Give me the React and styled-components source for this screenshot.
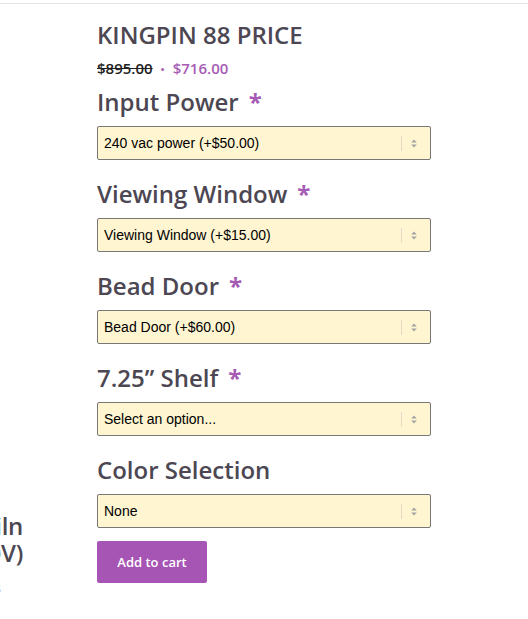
import { createGlobalStyle } from 'styled-components';
import styled from 'styled-components';

const options = [
  { label: 'Input Power', required: true, value: '240 vac power (+$50.00)' },
  { label: 'Viewing Window', required: true, value: 'Viewing Window (+$15.00)' },
  { label: 'Bead Door', required: true, value: 'Bead Door (+$60.00)' },
  { label: '7.25” Shelf', required: true, value: 'Select an option...' },
  { label: 'Color Selection', required: false, value: 'None' },
];

function App() {
  return (
    <>
      <GlobalStyle />
      <Page>
        <SideColumn>
          <SideTitle>
            Kingpin 88 Kiln
            <br />
            (240V)
          </SideTitle>
          <SideLink>Reviews</SideLink>
        </SideColumn>

        <Summary>
          <ProductTitle>KINGPIN 88 PRICE</ProductTitle>
          <PriceRow>
            <OldPrice>$895.00</OldPrice>
            <Dot>•</Dot>
            <NewPrice>$716.00</NewPrice>
          </PriceRow>

          {options.map((opt) => (
            <Field key={opt.label}>
              <FieldLabel>
                {opt.label}
                {opt.required && <Required>*</Required>}
              </FieldLabel>
              <SelectWrap>
                <Select defaultValue={opt.value}>
                  <option>{opt.value}</option>
                </Select>
                <SelectArrows>
                  <svg width="6" height="9" viewBox="0 0 6 9">
                    <path d="M3 0.5 L5.8 3.5 L0.2 3.5 Z" fill="#a3a3a3" />
                    <path d="M3 8.5 L5.8 5.5 L0.2 5.5 Z" fill="#a3a3a3" />
                  </svg>
                </SelectArrows>
              </SelectWrap>
            </Field>
          ))}

          <AddButton type="button">Add to cart</AddButton>
        </Summary>
      </Page>
    </>
  );
}

export default App;

const GlobalStyle = createGlobalStyle`
  html, body {
    margin: 0;
    padding: 0;
    background: #fff;
  }

  body {
    font-family: 'Open Sans', 'Noto Sans', sans-serif;
    overflow: hidden;
  }
`;

const Page = styled.div`
  margin-top: 3px;
  border-top: 1px solid #e3e3e3;
  height: 615px;
  display: grid;
  grid-template-columns: 27px 334px;
  column-gap: 70px;
`;

const SideColumn = styled.div`
  overflow: hidden;
  padding-top: 508px;
  display: flex;
  flex-flow: column;
  align-items: flex-end;
`;

const SideTitle = styled.h2`
  margin: 0;
  padding-right: 4px;
  font-size: 24px;
  line-height: 27px;
  font-weight: 600;
  letter-spacing: -0.3px;
  color: #4c4752;
  text-align: right;
  white-space: nowrap;
`;

const SideLink = styled.span`
  margin-top: 12px;
  padding-right: 26px;
  font-size: 14px;
  line-height: 20px;
  color: #a66fd0;
  white-space: nowrap;
`;

const Summary = styled.div`
  padding-top: 16px;
  display: flex;
  flex-flow: column;
  align-items: flex-start;
`;

const ProductTitle = styled.h1`
  margin: 0 0 9px;
  font-size: 24px;
  line-height: 29px;
  font-weight: 600;
  color: #4c4752;
`;

const PriceRow = styled.div`
  display: flex;
  align-items: baseline;
  gap: 8px;
  font-size: 15px;
  line-height: 20px;
  font-weight: 600;
  margin-bottom: 7px;
`;

const OldPrice = styled.del`
  color: #222;
  font-weight: 600;
`;

const Dot = styled.span`
  color: #a65cb4;
  font-size: 11px;
`;

const NewPrice = styled.span`
  color: #a65cb4;
`;

const Field = styled.div`
  width: 100%;
  margin-bottom: 19px;

  &:last-of-type {
    margin-bottom: 13px;
  }
`;

const FieldLabel = styled.label`
  display: block;
  margin-bottom: 9px;
  font-size: 24px;
  line-height: 30px;
  font-weight: 600;
  color: #4c4752;
`;

const Required = styled.span`
  margin-left: 10px;
  color: #a65cb4;
  font-weight: 700;
`;

const SelectWrap = styled.div`
  position: relative;
  width: 100%;
`;

const Select = styled.select`
  display: block;
  width: 100%;
  height: 34px;
  margin: 0;
  padding: 0 40px 0 6px;
  appearance: none;
  -webkit-appearance: none;
  background: #fff5d1;
  border: 1px solid #777;
  border-radius: 2px;
  font-family: 'Liberation Sans', Arial, sans-serif;
  font-size: 14px;
  color: #000;
  outline: none;
`;

const SelectArrows = styled.span`
  position: absolute;
  top: 8px;
  right: 14px;
  bottom: 8px;
  display: flex;
  align-items: center;
  gap: 9px;
  pointer-events: none;

  &::before {
    content: '';
    width: 1px;
    height: 15px;
    background: #e3dccb;
  }
`;

const AddButton = styled.button`
  width: 110px;
  height: 42px;
  border: none;
  border-radius: 2px;
  background: #a655b5;
  color: #fff;
  font-family: 'Open Sans', sans-serif;
  font-size: 13px;
  font-weight: 600;
  cursor: pointer;
`;
